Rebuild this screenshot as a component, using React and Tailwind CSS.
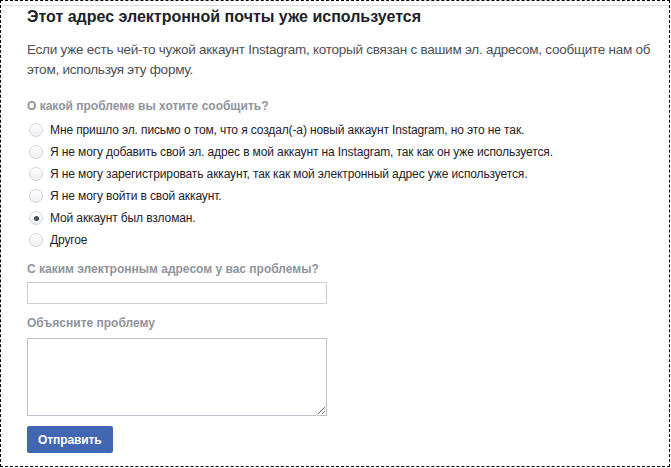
import { useState } from 'react';

const OPTIONS = [
  'Мне пришло эл. письмо о том, что я создал(-а) новый аккаунт Instagram, но это не так.',
  'Я не могу добавить свой эл. адрес в мой аккаунт на Instagram, так как он уже используется.',
  'Я не могу зарегистрировать аккаунт, так как мой электронный адрес уже используется.',
  'Я не могу войти в свой аккаунт.',
  'Мой аккаунт был взломан.',
  'Другое',
];

function Radio({ checked }) {
  return (
    <span className="w-[14px] h-[14px] rounded-full border border-[#d3d6db] bg-gradient-to-b from-white to-[#eceef1] flex items-center justify-center shrink-0">
      {checked && <span className="w-[5px] h-[5px] rounded-full bg-[#4b4f56]" />}
    </span>
  );
}

export default function App() {
  const [choice, setChoice] = useState(4);
  const [email, setEmail] = useState('');
  const [text, setText] = useState('');

  return (
    <div className="w-[670px] h-[467px] border border-dashed border-black px-[1px] pt-[4px] bg-white font-['Liberation_Sans',Arial,sans-serif]">
      <div className="border-t border-[#dddfe2] pl-[25px] pt-[1px]">
        <h1 className="text-[16px] leading-[20px] font-bold text-[#1d2129]">
          Этот адрес электронной почты уже используется
        </h1>
        <p className="mt-[13px] pr-[16px] text-[13.5px] leading-[20px] tracking-[-0.25px] text-[#4b4f56]">
          Если уже есть чей-то чужой аккаунт Instagram, который связан с вашим эл. адресом, сообщите нам об этом, используя эту форму.
        </p>

        <div className="mt-[18px] text-[12px] leading-[16px] font-bold text-[#90949c]">
          О какой проблеме вы хотите сообщить?
        </div>
        <div className="mt-[5px] flex flex-col">
          {OPTIONS.map((o, i) => (
            <label key={i} className="h-[22px] flex items-center gap-[7px] pl-[2px] cursor-pointer" onClick={() => setChoice(i)}>
              <Radio checked={choice === i} />
              <span className="text-[12px] leading-[16px] tracking-[-0.12px] text-[#1d2129]">{o}</span>
            </label>
          ))}
        </div>

        <div className="mt-[10px] text-[12px] leading-[16px] font-bold text-[#90949c]">
          С каким электронным адресом у вас проблемы?
        </div>
        <input
          value={email}
          onChange={e => setEmail(e.target.value)}
          className="mt-[5px] block w-[300px] h-[22px] border border-[#ccd0d5] px-[3px] text-[12px] outline-none"
        />

        <div className="mt-[11px] text-[12px] leading-[16px] font-bold text-[#90949c]">
          Объясните проблему
        </div>
        <textarea
          value={text}
          onChange={e => setText(e.target.value)}
          className="mt-[7px] block w-[300px] h-[78px] border border-[#bec3c9] px-[3px] text-[12px] outline-none"
        />

        <button className="mt-[10px] h-[27px] px-[11px] rounded-[2px] bg-[#4267b2] text-white text-[12px] font-bold tracking-[-0.1px]">
          Отправить
        </button>
      </div>
    </div>
  );
}
